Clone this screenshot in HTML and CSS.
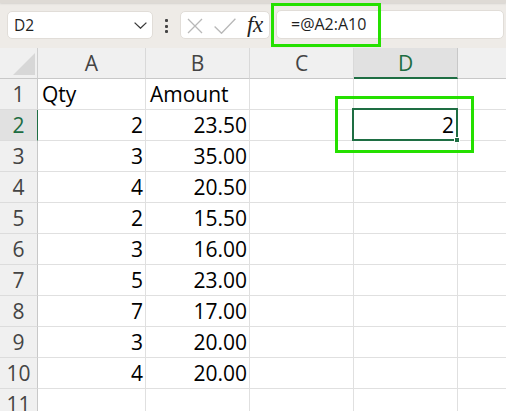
FILE: index.html
```html
<!DOCTYPE html>
<html>
<head>
<meta charset="utf-8">
<link rel="stylesheet" href="styles.css">
</head>
<body>
<div class="app">
  <div class="ribbon-edge"></div>
  <div class="fbar">
    <div class="namebox">
      <span class="nb-text">D2</span>
      <svg class="chev" width="13" height="7" viewBox="0 0 13 7"><polyline points="0.6,0.6 6.5,6.2 12.4,0.6" fill="none" stroke="#3a3a3a" stroke-width="1.3"/></svg>
    </div>
    <div class="vdots"><i></i><i></i><i></i></div>
    <div class="fbtns">
      <svg class="ico-x" width="16" height="16" viewBox="0 0 16 16"><path d="M1 1 L15 15 M15 1 L1 15" stroke="#b8b8b8" stroke-width="1.3" fill="none"/></svg>
      <svg class="ico-ok" width="22" height="16" viewBox="0 0 22 16"><path d="M0.6 8.5 L7.5 15.3 L21.4 0.8" stroke="#b8b8b8" stroke-width="1.3" fill="none"/></svg>
      <span class="fx">fx</span>
    </div>
    <div class="finput">=@A2:A10</div>
  </div>
  <div class="sheet">
    <div class="corner"><svg width="24" height="24" viewBox="0 0 24 24"><polygon points="23,1 23,23 1,23" fill="#d7d7d7"/></svg></div>
    <div class="ch">A</div><div class="ch">B</div><div class="ch">C</div><div class="ch sel-col">D</div><div class="ch last"></div>

    <div class="rh">1</div><div class="c">Qty</div><div class="c">Amount</div><div class="c"></div><div class="c"></div><div class="c last"></div>
    <div class="rh sel-row">2</div><div class="c num">2</div><div class="c num">23.50</div><div class="c"></div><div class="c num active">2<span class="selbox"></span><span class="handle"></span></div><div class="c last"></div>
    <div class="rh">3</div><div class="c num">3</div><div class="c num">35.00</div><div class="c"></div><div class="c"></div><div class="c last"></div>
    <div class="rh">4</div><div class="c num">4</div><div class="c num">20.50</div><div class="c"></div><div class="c"></div><div class="c last"></div>
    <div class="rh">5</div><div class="c num">2</div><div class="c num">15.50</div><div class="c"></div><div class="c"></div><div class="c last"></div>
    <div class="rh">6</div><div class="c num">3</div><div class="c num">16.00</div><div class="c"></div><div class="c"></div><div class="c last"></div>
    <div class="rh">7</div><div class="c num">5</div><div class="c num">23.00</div><div class="c"></div><div class="c"></div><div class="c last"></div>
    <div class="rh">8</div><div class="c num">7</div><div class="c num">17.00</div><div class="c"></div><div class="c"></div><div class="c last"></div>
    <div class="rh">9</div><div class="c num">3</div><div class="c num">20.00</div><div class="c"></div><div class="c"></div><div class="c last"></div>
    <div class="rh">10</div><div class="c num">4</div><div class="c num">20.00</div><div class="c"></div><div class="c"></div><div class="c last"></div>
    <div class="rh">11</div><div class="c"></div><div class="c"></div><div class="c"></div><div class="c"></div><div class="c last"></div>
  </div>
  <div class="hl hl-formula"></div>
  <div class="hl hl-cell"></div>
</div>
</body>
</html>
```
FILE: styles.css
```css
* { box-sizing: border-box; }
html, body { margin: 0; padding: 0; }
body {
  width: 506px;
  height: 411px;
  overflow: hidden;
  background: #ffffff;
  font-family: "Open Sans", "Noto Sans", sans-serif;
}
.app {
  position: relative;
  width: 506px;
  height: 411px;
  overflow: hidden;
  background: #ffffff;
}
.ribbon-edge {
  height: 3px;
  background: #dedad5;
  box-shadow: 0 1px 2px rgba(0, 0, 0, 0.10);
  position: relative;
  z-index: 1;
}
.fbar {
  height: 45px;
  background: #eeebe7;
  display: flex;
  align-items: flex-start;
  padding: 8px 0 0 7px;
}
.namebox {
  width: 146px;
  height: 28px;
  background: #ffffff;
  border: 1px solid #e1ddd8;
  border-radius: 5px;
  display: flex;
  align-items: center;
  justify-content: space-between;
  padding: 0 5px 0 6px;
}
.nb-text {
  font-size: 15.5px;
  color: #1f1f1f;
  line-height: 26px;
}
.chev { display: block; margin-top: 1px; }
.vdots {
  margin-left: 12px;
  margin-top: 8px;
  display: flex;
  flex-direction: column;
  gap: 2.5px;
}
.vdots i {
  display: block;
  width: 3px;
  height: 3px;
  border-radius: 1px;
  background: #444444;
}
.fbtns {
  margin-left: 12px;
  width: 90px;
  height: 28px;
  background: #ffffff;
  border: 1px solid #e1ddd8;
  border-radius: 5px;
  display: flex;
  align-items: center;
  padding-left: 6px;
}
.ico-x { display: block; margin-top: 1px; }
.ico-ok { display: block; margin-left: 11px; margin-top: 1px; }
.fx {
  margin-left: 11px;
  font-family: "Liberation Serif", "DejaVu Serif", serif;
  font-style: italic;
  font-size: 23px;
  line-height: 26px;
  color: #222222;
  letter-spacing: -0.5px;
}
.finput {
  margin-left: 6px;
  width: 228px;
  height: 29px;
  background: #ffffff;
  border: 1px solid #e1ddd8;
  border-radius: 5px;
  margin-top: -1px;
  padding-left: 14px;
  font-size: 16px;
  line-height: 27px;
  color: #1f1f1f;
}
.sheet {
  display: grid;
  grid-template-columns: 38px 108px 104px 104px 104px 1fr;
  grid-auto-rows: 31px;
}
.corner {
  background: #f0f0f0;
  border-right: 1px solid #cfcfcf;
  border-bottom: 1px solid #c8c8c8;
  display: flex;
  align-items: flex-end;
  justify-content: flex-end;
  padding: 0 1px 2px 0;
}
.corner svg { display: block; }
.ch {
  background: #f0f0f0;
  border-right: 1px solid #d9d9d9;
  border-bottom: 1px solid #c8c8c8;
  text-align: center;
  font-size: 21px;
  line-height: 30px;
  color: #444444;
}
.ch.sel-col {
  background: #e1e1e1;
  color: #1d6d42;
  border-bottom: 2px solid #1e6e43;
  border-right-color: #c8c8c8;
}
.ch.last { border-right: none; }
.rh {
  background: #f0f0f0;
  border-right: 1px solid #c8c8c8;
  border-bottom: 1px solid #dcdcdc;
  text-align: center;
  font-size: 21px;
  line-height: 31px;
  color: #444444;
}
.rh.sel-row {
  background: #e1e1e1;
  color: #1d6d42;
  border-right-color: #1e6e43;
}
.c {
  position: relative;
  border-right: 1px solid #e0e0e0;
  border-bottom: 1px solid #e0e0e0;
  font-size: 21px;
  line-height: 30px;
  color: #000000;
  padding: 0 2px 0 4px;
  white-space: nowrap;
}
.c.last { border-right: none; }
.c.num { text-align: right; }
.c.active { padding-right: 3px; z-index: 2; }
.selbox {
  position: absolute;
  left: -2px;
  top: -2px;
  right: -1px;
  bottom: -1px;
  border: 2px solid #1e6e43;
}
.handle {
  position: absolute;
  right: -3px;
  bottom: -3px;
  width: 6px;
  height: 6px;
  background: #1e6e43;
  border: 1px solid #ffffff;
}
.hl {
  position: absolute;
  border: 3px solid #25e000;
  pointer-events: none;
  z-index: 3;
}
.hl-formula {
  left: 271px;
  top: 3px;
  width: 110px;
  height: 44px;
}
.hl-cell {
  left: 335px;
  top: 96px;
  width: 139px;
  height: 57px;
}
```
